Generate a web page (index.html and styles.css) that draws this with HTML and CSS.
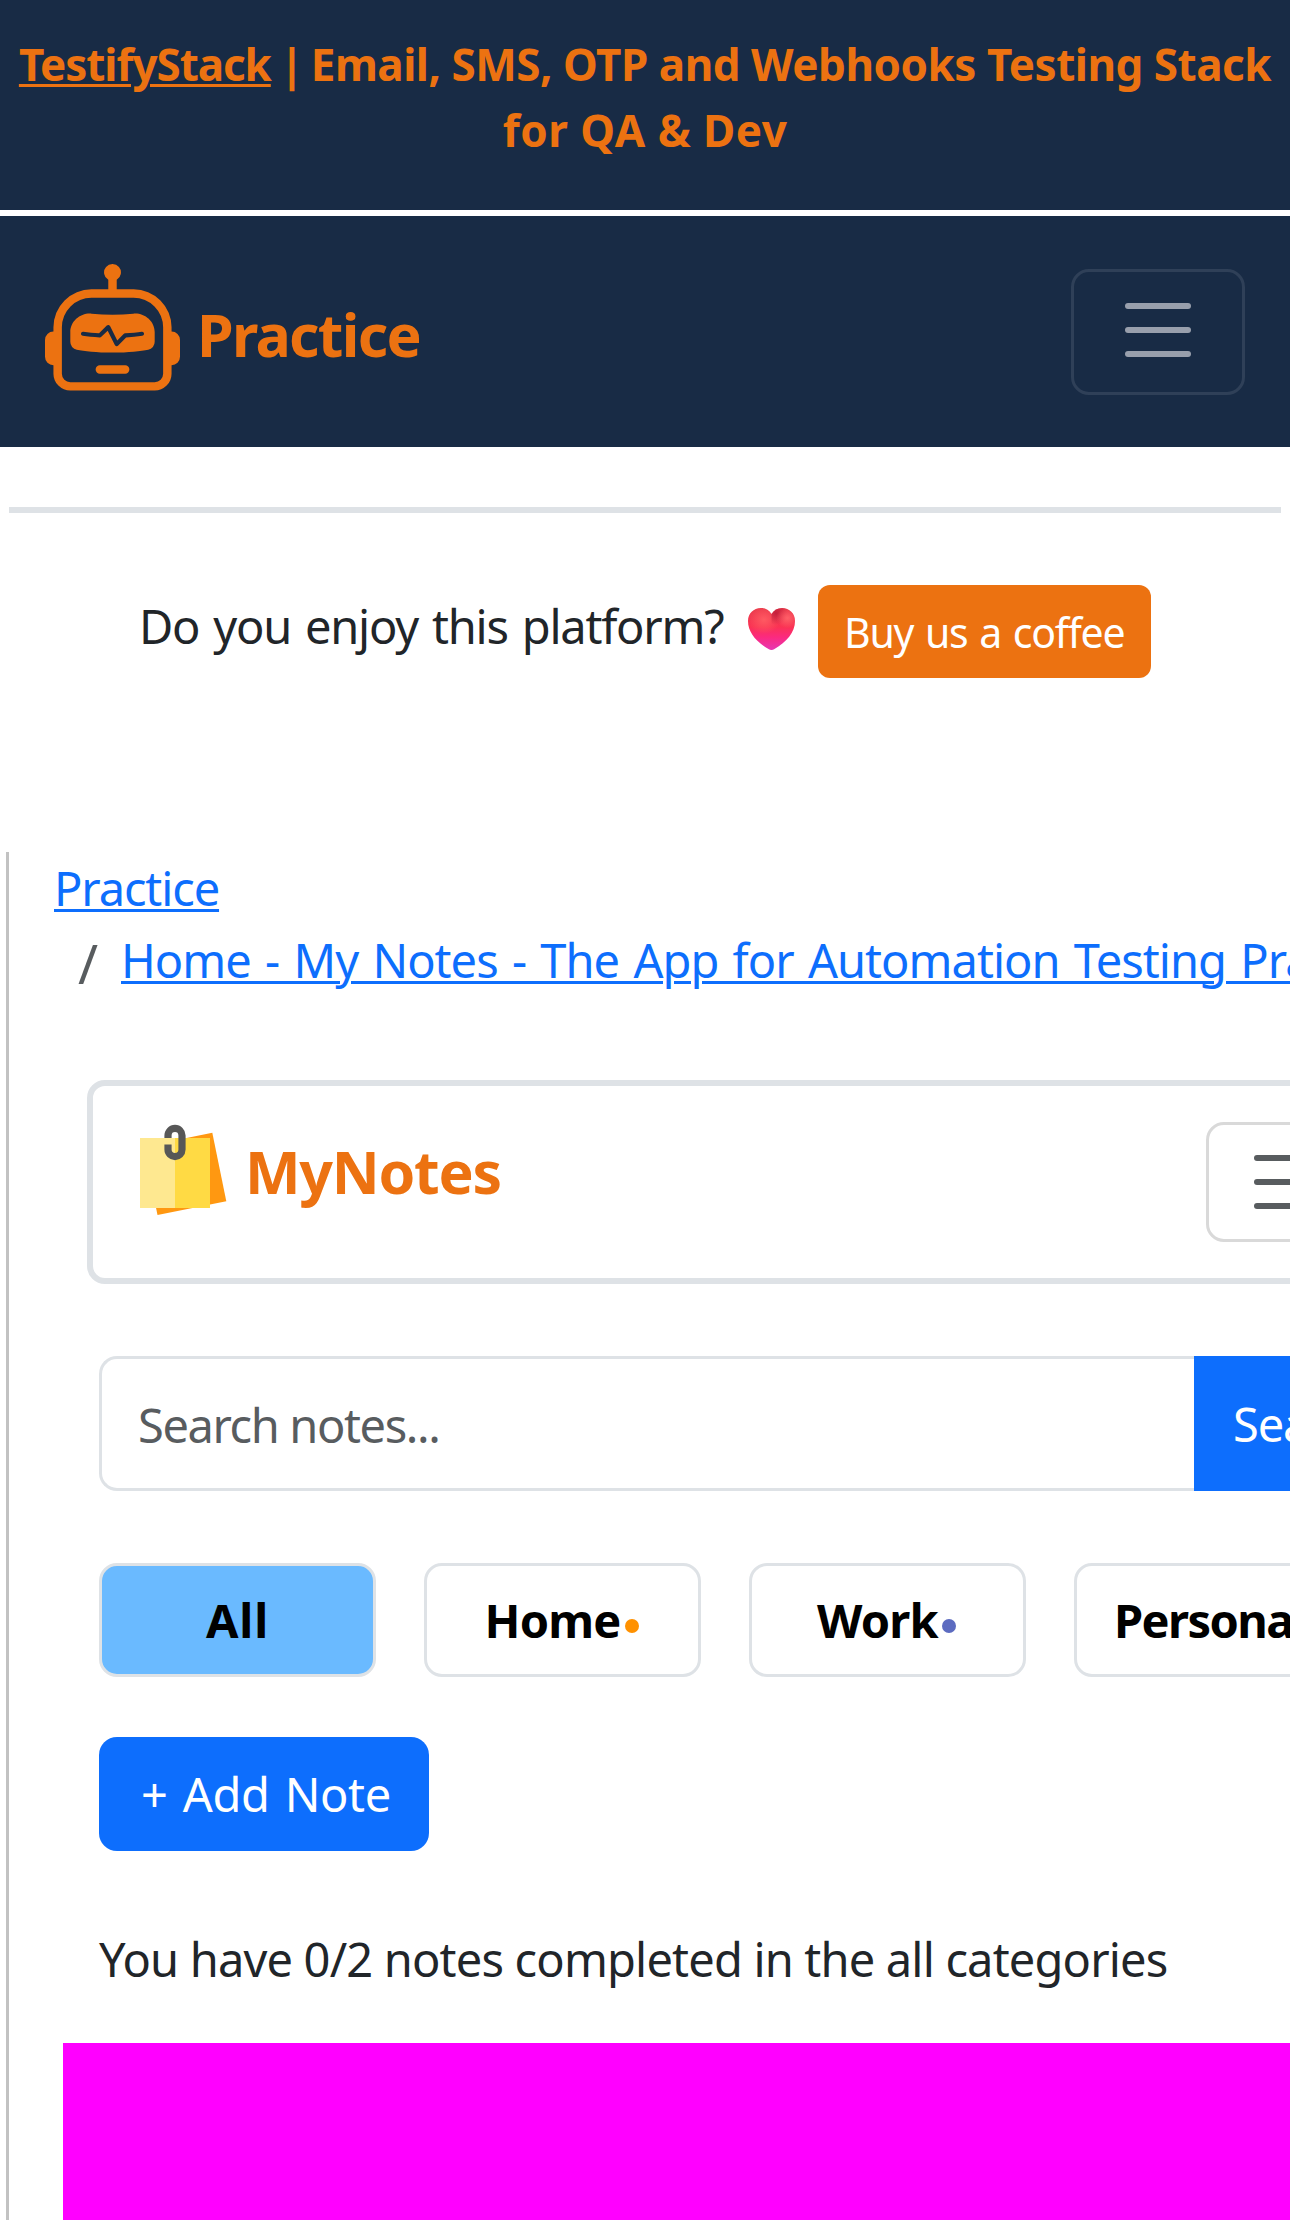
FILE: index.html
```html
<!DOCTYPE html>
<html lang="en">
<head>
<meta charset="utf-8">
<title>My Notes - The App for Automation Testing Practice</title>
<link rel="stylesheet" href="styles.css">
</head>
<body>
<div class="banner"><a class="banner-link" href="#">TestifyStack</a><span class="banner-divider"> | </span><span class="banner-text">Email, SMS, OTP and Webhooks Testing Stack</span><br><span class="banner-end">for QA &amp; Dev</span></div>

<nav class="navbar">
  <svg class="robot" viewBox="0 0 16 16" fill="currentColor"><path d="M6 12.5a.5.5 0 0 1 .5-.5h3a.5.5 0 0 1 0 1h-3a.5.5 0 0 1-.5-.5M3 8.062C3 6.76 4.235 5.765 5.53 5.886a26.6 26.6 0 0 0 4.94 0C11.765 5.765 13 6.76 13 8.062v1.157a.93.93 0 0 1-.765.935c-.845.147-2.34.346-4.235.346s-3.39-.2-4.235-.346A.93.93 0 0 1 3 9.219zm4.542-.827a.25.25 0 0 0-.217.068l-.92.9a25 25 0 0 1-1.871-.183.25.25 0 0 0-.068.495c.55.076 1.232.149 2.02.193a.25.25 0 0 0 .189-.071l.754-.736.847 1.71a.25.25 0 0 0 .404.062l.932-.97a25 25 0 0 0 1.922-.188.25.25 0 0 0-.068-.495c-.538.074-1.207.145-1.98.189a.25.25 0 0 0-.166.076l-.754.785-.842-1.7a.25.25 0 0 0-.182-.135"/><path d="M8.5 1.866a1 1 0 1 0-1 0V3h-2A4.5 4.5 0 0 0 1 7.5V8a1 1 0 0 0-1 1v2a1 1 0 0 0 1 1v1a2 2 0 0 0 2 2h10a2 2 0 0 0 2-2v-1a1 1 0 0 0 1-1V9a1 1 0 0 0-1-1v-.5A4.5 4.5 0 0 0 10.5 3h-2zM14 7.5V13a1 1 0 0 1-1 1H3a1 1 0 0 1-1-1V7.5A3.5 3.5 0 0 1 5.5 4h5A3.5 3.5 0 0 1 14 7.5"/></svg>
  <a class="navbar-brand">Practice</a>
  <button class="toggler toggler-dark" aria-label="Toggle navigation"><span class="bar"></span><span class="bar"></span><span class="bar"></span></button>
</nav>

<hr class="rule">

<div class="support">
  <span class="support-text">Do you enjoy this platform?</span>
  <svg class="heart" viewBox="0 0 47 42">
    <defs>
      <linearGradient id="base" x1="0" y1="0" x2="0" y2="1"><stop offset="0" stop-color="#e83a4a"/><stop offset=".45" stop-color="#fb3254"/><stop offset=".7" stop-color="#fb2a80"/><stop offset="1" stop-color="#e637b4"/></linearGradient>
      <radialGradient id="shine-left" cx=".34" cy=".28" r=".34"><stop offset="0" stop-color="#ff5a62"/><stop offset="1" stop-color="#ff5a62" stop-opacity="0"/></radialGradient>
      <radialGradient id="shine-right" cx=".84" cy=".24" r=".24"><stop offset="0" stop-color="#ff6068"/><stop offset="1" stop-color="#ff6068" stop-opacity="0"/></radialGradient>
      <radialGradient id="shade" gradientUnits="userSpaceOnUse" cx="28" cy="5" r="12"><stop offset="0" stop-color="#c4203c"/><stop offset="1" stop-color="#c4203c" stop-opacity="0"/></radialGradient>
      <path id="heart" d="M23.500 6C21 2 17.500 0 13 0 5.500 0 0 5.500 0 13c0 11.500 8.500 21 20.500 28 2 1.300 4 1.300 6 0C38.500 34 47 24.500 47 13 47 5.500 41.500 0 34 0c-4.500 0-8 2-10.500 6z"/>
    </defs>
    <use href="#heart" fill="url(#base)"/>
    <use href="#heart" fill="url(#shine-left)"/>
    <path fill="url(#shade)" d="M23.500 6C26 2 29.500 0 34 0c7.500 0 13 5.500 13 13L23.500 24z"/>
    <use href="#heart" fill="url(#shine-right)"/>
  </svg>
  <a class="coffee">Buy us a coffee</a>
</div>

<main class="frame">
  <ol class="breadcrumb">
    <li><a class="crumb-root" href="#">Practice</a></li>
    <li class="crumb-row"><span class="slash">/</span><a class="crumb-page" href="#">Home - My Notes - The App for Automation Testing Practice</a></li>
  </ol>

  <header class="notes-bar">
    <svg class="notes-icon" viewBox="0 0 87 92"><path fill="#ff9811" d="M72.300 8.700 86.300 77.200 17.500 91 3.600 22.700z"/><path fill="#ffda44" d="M35 14h35v70H35z"/><path fill="#fee890" d="M0 14h35v70H0z"/><path fill="none" stroke="#575757" stroke-width="7.200" d="M28 14V11.400a7 7 0 0 1 14 0v14.200a7 7 0 0 1-14 0v-5"/></svg>
    <span class="notes-title">MyNotes</span>
    <button class="toggler toggler-light" aria-label="Toggle menu"><span class="bar"></span><span class="bar"></span><span class="bar"></span></button>
  </header>

  <form class="search"><input class="search-input" placeholder="Search notes..."><button type="button" class="search-button">Search</button></form>

  <div class="chips">
    <span class="chip chip-active chip-all">All</span>
    <span class="chip">Home<i class="dot dot-home"></i></span>
    <span class="chip">Work<i class="dot dot-work"></i></span>
    <span class="chip chip-personal">Personal</span>
  </div>

  <button class="add">+ Add Note</button>
  <p class="summary">You have 0/2 notes completed in the all categories</p>
  <div class="panel"></div>
</main>
</body>
</html>
```
FILE: styles.css
```css
*, *::before, *::after { box-sizing: border-box; }
html, body { margin: 0; overflow: hidden; }
body {
  height: 2220px;
  background: #fff;
  color: #212529;
  font-family: "Noto Sans", "Open Sans", sans-serif;
  font-size: 47px;
  line-height: 72px;
}
button, input { margin: 0; font: inherit; }
a { text-decoration-thickness: 3px; text-underline-offset: 3px; }

.banner {
  height: 210px;
  padding-top: 31px;
  background: #182b45;
  color: #ec7211;
  font-size: 44px;
  font-weight: 700;
  line-height: 66px;
  text-align: center;
  white-space: nowrap;
}
.banner-link { color: inherit; letter-spacing: -1.07px; }
.banner-divider { letter-spacing: -2.4px; }
.banner-text { letter-spacing: -.48px; }
.banner-end { letter-spacing: .5px; }

.navbar {
  display: flex;
  align-items: flex-start;
  height: 231px;
  margin-top: 6px;
  padding: 0 45px;
  background: #182b45;
  color: #ec7211;
}
.robot { flex: none; width: 135px; height: 135px; margin-top: 48px; }
.navbar-brand {
  margin: 73px auto 0 17px;
  font-size: 59px;
  font-weight: 700;
  line-height: 90px;
  letter-spacing: -1.69px;
}
.toggler {
  display: flex;
  flex: none;
  flex-direction: column;
  align-items: center;
  gap: 18px;
  border: 3px solid;
  border-radius: 18px;
  background: none;
}
.bar { width: 66px; height: 6px; border-radius: 3px; }
.toggler-dark { width: 174px; height: 126px; margin-top: 53px; padding: 31px 0 0; border-color: #2f4058; }
.toggler-dark .bar { background: #989fac; }
.toggler-light { width: 162px; height: 120px; margin: 36px 0 0 auto; padding: 30px 0 0; border-color: #d9d9d9; }
.toggler-light .bar { background: #585c5f; }

.rule { height: 6px; margin: 60px 9px 0; border: 0; background: #dee2e6; }

.support { display: flex; align-items: flex-start; margin-top: 72px; padding-left: 139px; white-space: nowrap; }
.support-text { width: 584px; margin-top: 5px; letter-spacing: -1.23px; word-spacing: 3px; }
.heart { flex: none; width: 47px; height: 42px; margin: 23px 0 0 25px; }
.coffee {
  width: 333px;
  height: 93px;
  margin-left: 23px;
  padding: 16px 0 0 26px;
  border-radius: 12px;
  background: #ec7211;
  color: #fff;
  font-size: 41px;
  line-height: 63px;
  letter-spacing: -1.2px;
  word-spacing: 2.2px;
}

.frame {
  height: 1368px;
  margin: 174px 0 0 6px;
  border-left: 3px solid #c2c2c2;
  overflow: hidden;
}
.breadcrumb { margin: 0; padding: 0 0 0 45px; list-style: none; white-space: nowrap; }
.breadcrumb a { color: #0d6efd; }
.crumb-root { letter-spacing: -1.12px; }
.crumb-row { display: flex; height: 72px; }
.slash { flex: none; width: 43px; margin: 3px 0 0 24px; color: #585c5f; font-size: 54px; }
.crumb-page { flex: none; letter-spacing: -.97px; word-spacing: 3px; }

.notes-bar {
  display: flex;
  align-items: flex-start;
  width: 1317px;
  height: 204px;
  margin: 84px 0 0 78px;
  padding: 0 30px 0 47px;
  border: 6px solid #dee2e6;
  border-radius: 18px;
}
.notes-icon { flex: none; width: 87px; height: 92px; margin-top: 38px; }
.notes-title {
  margin: 40px 0 0 18px;
  color: #ec7211;
  font-size: 59px;
  font-weight: 700;
  line-height: 90px;
  letter-spacing: -1.27px;
}

.search { display: flex; width: 1320px; height: 135px; margin: 72px 0 0 90px; }
.search-input {
  width: 1095px;
  padding: 2px 0 0 36px;
  border: 3px solid #dee2e6;
  border-right: 0;
  border-radius: 18px 0 0 18px;
  background: #fff;
  letter-spacing: -1.39px;
}
.search-input::placeholder { color: #585c5f; opacity: 1; }
.search-button {
  flex: 1;
  padding: 0 0 0 39px;
  border: 0;
  background: #0d6efd;
  color: #fff;
  letter-spacing: -1.1px;
  text-align: left;
}

.chips { display: flex; gap: 48px; width: 1500px; margin: 72px 0 0 90px; }
.chip {
  display: flex;
  flex: none;
  align-items: center;
  justify-content: center;
  width: 277px;
  height: 114px;
  border: 3px solid #dee2e6;
  border-radius: 18px;
  color: #000;
  font-weight: 700;
  letter-spacing: -.8px;
}
.chip-active { background: #6abaff; }
.chip-all { letter-spacing: .8px; }
.chip-personal { justify-content: flex-start; padding-left: 37px; letter-spacing: -1.6px; }
.dot { width: 14px; height: 14px; margin: 11px 2px 0 4px; border-radius: 50%; }
.dot-home { background: #ff9100; }
.dot-work { background: #5c6bc0; }

.add {
  display: block;
  width: 330px;
  height: 114px;
  margin: 60px 0 0 90px;
  padding: 0 0 0 42px;
  border: 0;
  border-radius: 18px;
  background: #0d6efd;
  color: #fff;
  letter-spacing: -.4px;
  word-spacing: 3.5px;
  text-align: left;
}
.summary { margin: 72px 0 0 90px; letter-spacing: -.82px; white-space: nowrap; }
.panel { height: 177px; margin: 48px 0 0 54px; background: #f0f; }
```
